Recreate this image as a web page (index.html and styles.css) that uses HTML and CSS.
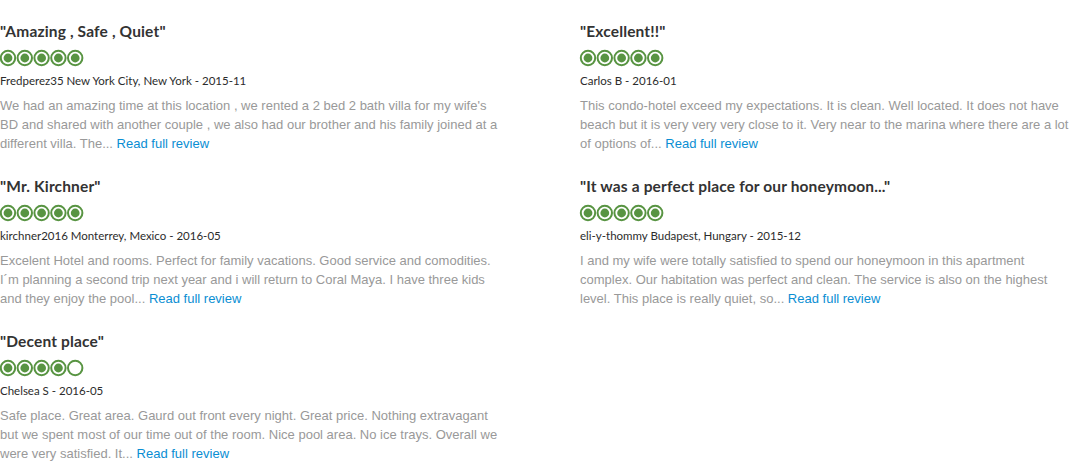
FILE: index.html
```html
<!DOCTYPE html>
<html>
<head>
<meta charset="utf-8">
<link rel="stylesheet" href="styles.css">
</head>
<body>
<div class="reviews">
  <div class="col">
    <div class="review">
      <h3 class="title">"Amazing , Safe , Quiet"</h3>
      <svg class="bubbles" viewBox="0 0 86 18" width="86" height="18"><g fill="none" stroke="#589442" stroke-width="2"><circle cx="9" cy="9" r="7.2"/><circle cx="25.8" cy="9" r="7.2"/><circle cx="42.6" cy="9" r="7.2"/><circle cx="59.4" cy="9" r="7.2"/><circle cx="76.2" cy="9" r="7.2"/></g><g fill="#589442"><circle cx="9" cy="9" r="4.4"/><circle cx="25.8" cy="9" r="4.4"/><circle cx="42.6" cy="9" r="4.4"/><circle cx="59.4" cy="9" r="4.4"/><circle cx="76.2" cy="9" r="4.4"/></g></svg>
      <div class="meta">Fredperez35 New York City, New York - 2015-11</div>
      <p class="text">We had an amazing time at this location , we rented a 2 bed 2 bath villa for my wife's BD and shared with another couple , we also had our brother and his family joined at a different villa. The... <a class="more" href="#">Read full review</a></p>
    </div>
    <div class="review">
      <h3 class="title">"Mr. Kirchner"</h3>
      <svg class="bubbles" viewBox="0 0 86 18" width="86" height="18"><g fill="none" stroke="#589442" stroke-width="2"><circle cx="9" cy="9" r="7.2"/><circle cx="25.8" cy="9" r="7.2"/><circle cx="42.6" cy="9" r="7.2"/><circle cx="59.4" cy="9" r="7.2"/><circle cx="76.2" cy="9" r="7.2"/></g><g fill="#589442"><circle cx="9" cy="9" r="4.4"/><circle cx="25.8" cy="9" r="4.4"/><circle cx="42.6" cy="9" r="4.4"/><circle cx="59.4" cy="9" r="4.4"/><circle cx="76.2" cy="9" r="4.4"/></g></svg>
      <div class="meta">kirchner2016 Monterrey, Mexico - 2016-05</div>
      <p class="text">Excelent Hotel and rooms. Perfect for family vacations. Good service and comodities. <span class="nw">I´m</span> planning a second trip next year and i will return to Coral Maya. I have three kids and they enjoy the pool... <a class="more" href="#">Read full review</a></p>
    </div>
    <div class="review">
      <h3 class="title">"Decent place"</h3>
      <svg class="bubbles" viewBox="0 0 86 18" width="86" height="18"><g fill="none" stroke="#589442" stroke-width="2"><circle cx="9" cy="9" r="7.2"/><circle cx="25.8" cy="9" r="7.2"/><circle cx="42.6" cy="9" r="7.2"/><circle cx="59.4" cy="9" r="7.2"/><circle cx="76.2" cy="9" r="7.2"/></g><g fill="#589442"><circle cx="9" cy="9" r="4.4"/><circle cx="25.8" cy="9" r="4.4"/><circle cx="42.6" cy="9" r="4.4"/><circle cx="59.4" cy="9" r="4.4"/></g></svg>
      <div class="meta">Chelsea S - 2016-05</div>
      <p class="text">Safe place. Great area. Gaurd out front every night. Great price. Nothing extravagant but we spent most of our time out of the room. Nice pool area. No ice trays. Overall we were very satisfied. It... <a class="more" href="#">Read full review</a></p>
    </div>
  </div>
  <div class="col">
    <div class="review">
      <h3 class="title">"Excellent!!"</h3>
      <svg class="bubbles" viewBox="0 0 86 18" width="86" height="18"><g fill="none" stroke="#589442" stroke-width="2"><circle cx="9" cy="9" r="7.2"/><circle cx="25.8" cy="9" r="7.2"/><circle cx="42.6" cy="9" r="7.2"/><circle cx="59.4" cy="9" r="7.2"/><circle cx="76.2" cy="9" r="7.2"/></g><g fill="#589442"><circle cx="9" cy="9" r="4.4"/><circle cx="25.8" cy="9" r="4.4"/><circle cx="42.6" cy="9" r="4.4"/><circle cx="59.4" cy="9" r="4.4"/><circle cx="76.2" cy="9" r="4.4"/></g></svg>
      <div class="meta">Carlos B - 2016-01</div>
      <p class="text">This condo-hotel exceed my expectations. It is clean. Well located. It does not have beach but it is very very very close to it. Very near to the marina where there are a lot of options of... <a class="more" href="#">Read full review</a></p>
    </div>
    <div class="review">
      <h3 class="title">"It was a perfect place for our honeymoon..."</h3>
      <svg class="bubbles" viewBox="0 0 86 18" width="86" height="18"><g fill="none" stroke="#589442" stroke-width="2"><circle cx="9" cy="9" r="7.2"/><circle cx="25.8" cy="9" r="7.2"/><circle cx="42.6" cy="9" r="7.2"/><circle cx="59.4" cy="9" r="7.2"/><circle cx="76.2" cy="9" r="7.2"/></g><g fill="#589442"><circle cx="9" cy="9" r="4.4"/><circle cx="25.8" cy="9" r="4.4"/><circle cx="42.6" cy="9" r="4.4"/><circle cx="59.4" cy="9" r="4.4"/><circle cx="76.2" cy="9" r="4.4"/></g></svg>
      <div class="meta">eli-y-thommy Budapest, Hungary - 2015-12</div>
      <p class="text">I and my wife were totally satisfied to spend our honeymoon in this apartment complex. Our habitation was perfect and clean. The service is also on the highest level. This place is really quiet, so... <a class="more" href="#">Read full review</a></p>
    </div>
  </div>
</div>
</body>
</html>
```
FILE: styles.css
```css
html, body {
  margin: 0;
  padding: 0;
  background: #fff;
}
.reviews {
  display: grid;
  grid-template-columns: 505px 1fr;
  column-gap: 75px;
  padding: 20px 0 0 0;
}
.review {
  height: 155px;
}
.title {
  margin: 0;
  font-family: "Lato", "Liberation Sans", sans-serif;
  font-weight: 700;
  font-size: 15.5px;
  letter-spacing: 0.15px;
  line-height: 22px;
  color: #333;
}
.bubbles {
  display: block;
  margin: 7px 0 0 -1px;
}
.meta {
  margin-top: 6px;
  font-family: "Lato", "Liberation Sans", sans-serif;
  font-size: 11.5px;
  line-height: 16px;
  color: #2c2c2c;
}
.text {
  margin: 7px 0 0 0;
  font-family: "Liberation Sans", Arial, sans-serif;
  font-size: 13px;
  line-height: 19px;
  color: #999;
}
.nw {
  white-space: nowrap;
}
.more {
  color: #0a8ed3;
  text-decoration: none;
}
```
